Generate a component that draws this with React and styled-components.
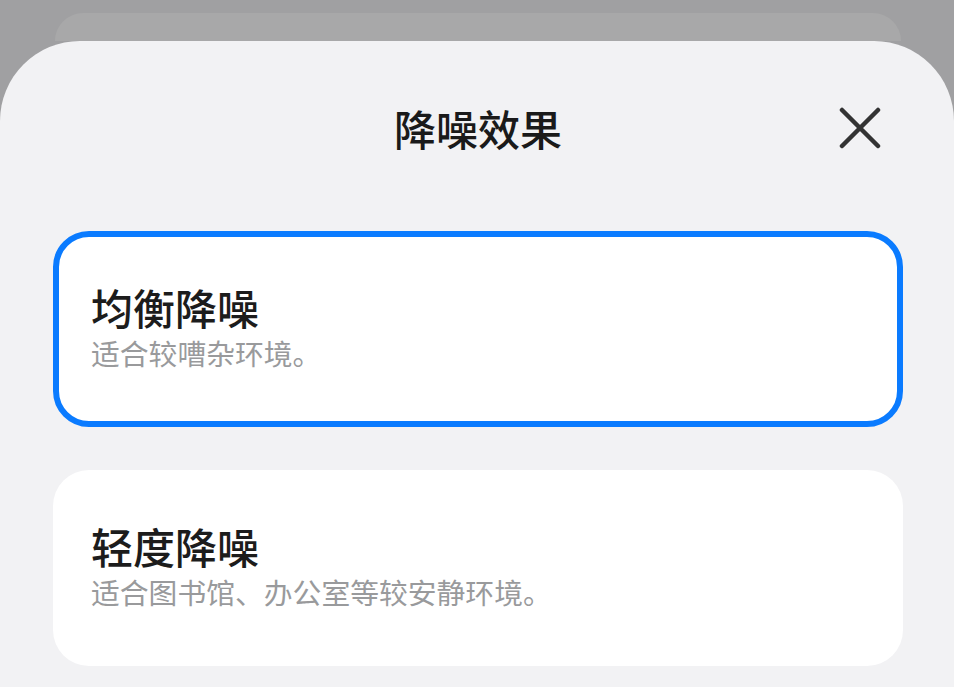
import React from "react";
import styled, { createGlobalStyle } from "styled-components";

const Global = createGlobalStyle`
  html, body { margin: 0; padding: 0; }
  body {
    background: #a0a0a2;
    font-family: "Noto Sans CJK SC", "Noto Sans", sans-serif;
    overflow: hidden;
  }
`;

const Page = styled.div`
  width: 954px;
  height: 687px;
  display: flex;
  flex-direction: column;
  padding-top: 13px;
  box-sizing: border-box;
  background: #a0a0a2;
`;

const BackSheet = styled.div`
  height: 28px;
  margin: 0 53px 0 55px;
  background: #a8a8a9;
  border-radius: 30px 30px 0 0;
  flex: none;
`;

const Sheet = styled.div`
  flex: 1;
  background: #f2f2f4;
  border-radius: 80px 80px 0 0;
  padding: 0 51px 0 53px;
  display: flex;
  flex-direction: column;
`;

const Header = styled.div`
  display: grid;
  grid-template-columns: 1fr auto 1fr;
  align-items: center;
  height: 56px;
  margin-top: 59px;
  margin-bottom: 75px;
`;

const Title = styled.h1`
  grid-column: 2;
  margin: 0;
  font-size: 42px;
  font-weight: 500;
  color: #1a1a1a;
  line-height: 56px;
`;

const Close = styled.button`
  grid-column: 3;
  justify-self: end;
  margin-right: 21px;
  width: 44px;
  height: 44px;
  padding: 0;
  border: none;
  background: transparent;
  display: flex;
  align-items: center;
  justify-content: center;
`;

const List = styled.div`
  display: flex;
  flex-direction: column;
  gap: 43px;
`;

const Card = styled.div`
  box-sizing: border-box;
  height: 196px;
  border-radius: 36px;
  background: #fff;
  border: 6px solid ${(p) => (p.$selected ? "#0a7bff" : "transparent")};
  padding: 0 32px 7px;
  display: flex;
  flex-direction: column;
  justify-content: center;
`;

const CardTitle = styled.div`
  font-size: 42px;
  font-weight: 500;
  color: #1c1c1c;
  line-height: 52px;
`;

const CardDesc = styled.div`
  font-size: 28.8px;
  color: #999a9c;
  line-height: 36px;
  margin-top: 2px;
`;

const options = [
  { title: "均衡降噪", desc: "适合较嘈杂环境。", selected: true },
  { title: "轻度降噪", desc: "适合图书馆、办公室等较安静环境。", selected: false },
];

export default function App() {
  return (
    <Page>
      <Global />
      <BackSheet />
      <Sheet>
        <Header>
          <Title>降噪效果</Title>
          <Close aria-label="关闭">
            <svg width="42" height="42" viewBox="0 0 42 42">
              <path
                d="M3 3 L39 39 M39 3 L3 39"
                stroke="#333"
                strokeWidth="4.5"
                strokeLinecap="round"
                fill="none"
              />
            </svg>
          </Close>
        </Header>
        <List>
          {options.map((o) => (
            <Card key={o.title} $selected={o.selected}>
              <CardTitle>{o.title}</CardTitle>
              <CardDesc>{o.desc}</CardDesc>
            </Card>
          ))}
        </List>
      </Sheet>
    </Page>
  );
}
